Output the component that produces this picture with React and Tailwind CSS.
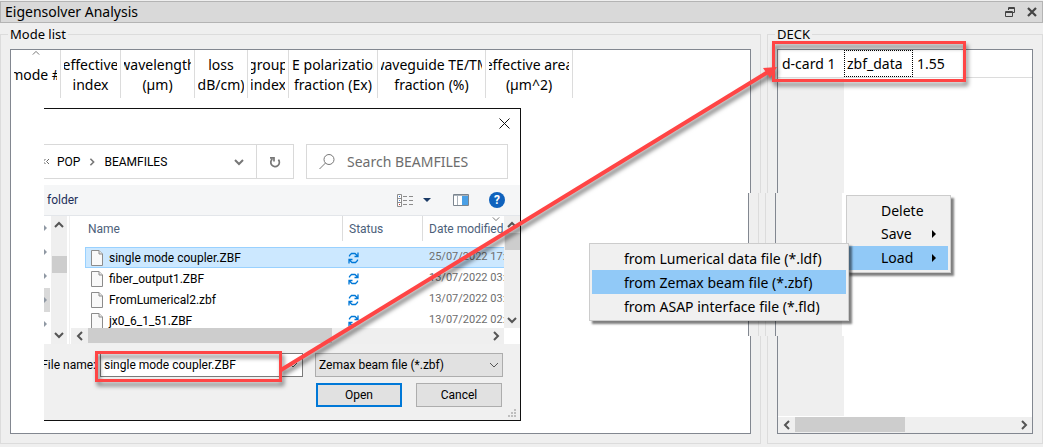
import React, { useState } from 'react';

const MODE_COLUMNS = [
    { lines: ['mode #'], width: 'w-[50px]', sorted: true },
    { lines: ['effective', 'index'], width: 'w-[60px]' },
    { lines: ['wavelength', '(µm)'], width: 'w-[74px]' },
    { lines: ['loss', 'dB/cm)'], width: 'w-[53px]' },
    { lines: ['group', 'index'], width: 'w-[41px]' },
    { lines: ['TE polarization', 'fraction (Ex)'], width: 'w-[89px]' },
    { lines: ['waveguide TE/TM', 'fraction (%)'], width: 'w-[108px]' },
    { lines: ['effective area', '(µm^2)'], width: 'w-[87px]' },
];

const FILES = [
    { name: 'single mode coupler.ZBF', date: '25/07/2022 17:' },
    { name: 'fiber_output1.ZBF', date: '13/07/2022 03:' },
    { name: 'FromLumerical2.zbf', date: '13/07/2022 03:' },
    { name: 'jx0_6_1_51.ZBF', date: '13/07/2022 02:' },
];

const LOAD_ITEMS = [
    'from Lumerical data file (*.ldf)',
    'from Zemax beam file (*.zbf)',
    'from ASAP interface file (*.fld)',
];

const CHEVRONS = {
    up: 'M1 7 L5 3 L9 7',
    down: 'M1 3 L5 7 L9 3',
    left: 'M7 1 L3 5 L7 9',
    right: 'M3 1 L7 5 L3 9',
};

const Chevron = ({ dir, className = 'text-[#555555]', stroke = 2, size = 10 }) => (
    <svg width={size} height={size} viewBox="0 0 10 10" className={`shrink-0 ${className}`} fill="none" stroke="currentColor" strokeWidth={stroke}>
        <path d={CHEVRONS[dir]} />
    </svg>
);

const FileIcon = () => (
    <svg width="12" height="16" viewBox="0 0 12 16" className="shrink-0">
        <path d="M0.5 0.5 H8 L11.5 4 V15.5 H0.5 Z" fill="#f9f9f9" stroke="#8c8c8c" />
        <path d="M8 0.5 V4 H11.5" fill="#e6e6e6" stroke="#8c8c8c" />
    </svg>
);

const SyncIcon = () => (
    <svg width="11" height="12" viewBox="0 0 11 12" className="shrink-0" fill="none" stroke="#0078d7" strokeWidth="1.3">
        <path d="M1.5 4.5 V3.5 L3.5 1.5 H7 L9.6 4 M10 0.5 V4.5 H6.5" />
        <path d="M9.5 7.5 V8.5 L7.5 10.5 H4 L1.4 8 M1 11.5 V7.5 H4.5" />
    </svg>
);

const TitleBar = () => (
    <header className="mt-px flex h-[22px] items-center justify-between border border-[#b4b4b4] bg-[#d9d9d9] pl-1">
        <h1 className="text-sm leading-5">Eigensolver Analysis</h1>
        <div className="flex items-center gap-1">
            <button aria-label="Restore" className="flex h-4 w-4 items-center justify-center">
                <svg width="10" height="10" viewBox="0 0 10 10" fill="none" stroke="#444444">
                    <path d="M3.5 3 V0.5 H9.5 V5.5 H7.5 M3 1.5 H10" />
                    <path d="M0.5 4.5 H7.5 V9.5 H0.5 Z M0 5.5 H8" />
                </svg>
            </button>
            <button aria-label="Close" className="flex h-4 w-5 items-center justify-center">
                <svg width="10" height="10" viewBox="0 0 10 10" stroke="#444444" strokeWidth="2.2">
                    <path d="M1 1 L9 9 M9 1 L1 9" />
                </svg>
            </button>
        </div>
    </header>
);

const ModeList = () => (
    <fieldset className="flex min-w-0 flex-1 flex-col border border-[#dcdcdc] px-[9px] pb-[9px] pt-[5px]">
        <legend className="-ml-0.5 px-0.5 text-[13px] leading-5">Mode list</legend>
        <div className="flex-1 border border-[#828790] bg-white">
            <table className="w-[562px] table-fixed border-separate border-spacing-0">
                <thead>
                    <tr>
                        {MODE_COLUMNS.map((col) => (
                            <th key={col.lines[0]} className={`${col.width} relative h-12 border-r border-[#dcdcdc] p-0 font-normal`}>
                                {col.sorted && (
                                    <span className="absolute inset-x-0 -top-px flex justify-center">
                                        <Chevron dir="up" stroke={1} size={8} />
                                    </span>
                                )}
                                <div className="mx-[3px] overflow-hidden pt-0.5 text-sm leading-5">
                                    {col.lines.map((line) => (
                                        <div key={line} className="flex justify-center whitespace-nowrap">{line}</div>
                                    ))}
                                </div>
                            </th>
                        ))}
                    </tr>
                </thead>
            </table>
        </div>
    </fieldset>
);

const Deck = () => (
    <fieldset className="flex w-[276px] min-w-0 shrink-0 flex-col border border-[#dcdcdc] px-[9px] pb-[9px] pt-[5px]">
        <legend className="-ml-0.5 px-0.5 text-[13px] leading-5">DECK</legend>
        <div className="flex flex-1 flex-col border border-[#828790] bg-white">
            <table className="w-full table-fixed border-separate border-spacing-0 text-sm">
                <tbody>
                    <tr>
                        <th className="h-7 w-[66px] whitespace-nowrap border-b border-[#dcdcdc] p-0 pl-1 text-left font-normal">d-card 1</th>
                        <td className="w-[69px] border-b border-[#dcdcdc] p-0">
                            <div className="flex h-[27px] items-center border border-dotted border-black pl-[2px]">zbf_data</div>
                        </td>
                        <td className="border-b border-[#dcdcdc] p-0 pl-1">1.55</td>
                    </tr>
                </tbody>
            </table>
            <div className="w-[66px] flex-1 bg-[#efefef]" />
            <div className="mt-px flex h-4 items-center bg-[#efefef]">
                <span className="flex w-[17px] justify-center"><Chevron dir="left" /></span>
                <div className="flex h-full flex-1">
                    <div className="h-[15px] w-[110px] bg-[#cdcdcd]" />
                </div>
                <span className="flex w-[17px] justify-center"><Chevron dir="right" /></span>
            </div>
        </div>
    </fieldset>
);

// Slice of the splitter between the two panels, behind the context menu
const SplitterSlice = () => (
    <div className="absolute left-[584px] top-[193px] flex h-[143px] w-[262px] bg-white">
        <div className="w-[165px] border-r border-[#828790]" />
        <div className="w-[10px] border-r border-[#dcdcdc] bg-[#efefef]" />
        <div className="w-[7px] border-r border-[#dcdcdc] bg-[#efefef]" />
        <div className="w-[10px] border-r border-[#828790] bg-[#efefef]" />
        <div className="w-[66px] bg-[#efefef]" />
    </div>
);

const AddressRow = () => (
    <div className="flex h-[35px] gap-3 pr-3">
        <div className="flex w-[250px] border border-l-0 border-[#d9d9d9] text-xs">
            <div className="flex flex-1 items-center overflow-hidden">
                <svg width="6" height="7" viewBox="0 0 6 7" fill="none" stroke="#666666" className="shrink-0">
                    <path d="M1.5 1 L-1 3.5 L1.5 6 M5 1 L2.5 3.5 L5 6" />
                </svg>
                <span className="ml-[7px]">POP</span>
                <span className="mx-2"><Chevron dir="right" size={8} className="text-[#777777]" /></span>
                <span>BEAMFILES</span>
                <button aria-label="Previous locations" className="ml-auto mr-3"><Chevron dir="down" className="text-[#777777]" /></button>
            </div>
            <button aria-label="Refresh" className="flex w-[37px] items-center justify-center border-l border-[#d9d9d9]">
                <svg width="12" height="12" viewBox="0 0 12 12" fill="none" stroke="#777777" strokeWidth="1.7">
                    <path d="M3.4 3 A4.3 4.3 0 1 0 9.4 3.6 M1 1.8 H5 V5.6" />
                </svg>
            </button>
        </div>
        <label className="flex min-w-0 flex-1 items-center border border-[#d9d9d9] pl-3">
            <svg width="16" height="16" viewBox="0 0 16 16" fill="none" stroke="#777777" className="shrink-0">
                <circle cx="10" cy="5.5" r="5" />
                <path d="M6.5 9 L0.5 15" />
            </svg>
            <input aria-label="Search BEAMFILES" placeholder="Search BEAMFILES" className="ml-3 w-full min-w-0 font-['Noto_Sans',sans-serif] text-sm outline-none placeholder:text-[#6d6d6d]" />
        </label>
    </div>
);

const Toolbar = () => (
    <div className="mt-[6px] flex h-[31px] items-center border-b border-[#e3e6ea] bg-[#f5f6f7] pl-[3px] pr-[15px] text-xs text-[#1e2f5a]">
        <button>folder</button>
        <button aria-label="Change view" className="ml-auto flex items-center gap-[9px]">
            <svg width="17" height="13" viewBox="0 0 17 13">
                <path d="M0.5 0.5 H4.5 V12.5 H0.5 Z M0.5 4.5 H4.5 M0.5 8.5 H4.5" fill="#ffffff" stroke="#8c8c8c" />
                <path d="M6 2.5 H10 M12 2.5 H16 M6 6.5 H10 M12 6.5 H16 M6 10.5 H10 M12 10.5 H16" stroke="#8c8c8c" />
                <path d="M2 2 H3 V3 H2 Z M2 6 H3 V7 H2 Z" fill="#3d7edb" />
                <path d="M2 10 H3 V11 H2 Z" fill="#d03030" />
            </svg>
            <svg width="8" height="4" viewBox="0 0 8 4"><path d="M0 0 H8 L4 4 Z" fill="#1b3a66" /></svg>
        </button>
        <button aria-label="Preview pane" className="ml-[22px]">
            <svg width="16" height="12" viewBox="0 0 16 12">
                <path d="M0.5 0.5 H15.5 V11.5 H0.5 Z" fill="#ffffff" stroke="#7b858f" />
                <path d="M1 1.5 H15 M4.5 1 V11" stroke="#a9b2ba" />
                <path d="M9 2 H15 V11 H9 Z" fill="#4aa0e6" />
            </svg>
        </button>
        <button aria-label="Help" className="ml-5 flex h-4 w-4 items-center justify-center rounded-full bg-[#0f62bd] text-xs font-bold text-white">?</button>
    </div>
);

const FolderTree = () => (
    <div className="flex w-[26px] border-r border-[#f0f0f0]">
        <div className="flex w-[7px] flex-col">
            {[0, 1, 2, 3, 4].map((i) => (
                <div key={i} className={`flex h-6 w-[6px] shrink-0 items-center ${i === 3 ? 'bg-[#d9d9d9]' : ''}`}>
                    <svg width="3" height="6" viewBox="0 0 3 6"><path d="M0 0 L3 3 L0 6 Z" fill="#8f98a3" /></svg>
                </div>
            ))}
        </div>
        <div className="flex w-4 flex-col items-center justify-between bg-[#efefef] py-1">
            <Chevron dir="up" />
            <div className="mb-8 h-[17px] w-[15px] bg-[#cdcdcd]" />
            <Chevron dir="down" />
        </div>
    </div>
);

const FileList = () => {
    const [selected, setSelected] = useState(0);

    return (
        <div className="flex min-w-0 flex-1 flex-col pl-px">
            <div className="flex h-28">
                <div className="min-w-0 flex-1 overflow-hidden">
                    <table className="w-full table-fixed border-separate border-spacing-0 text-xs">
                        <thead>
                            <tr className="h-[25px] text-left text-[#4c607a]">
                                <th className="w-[272px] border-r border-[#dcdcdc] p-0 pl-[17px] font-normal">Name</th>
                                <th className="w-20 border-r border-[#dcdcdc] p-0 pl-[6px] font-normal">Status</th>
                                <th className="relative whitespace-nowrap p-0 pl-[6px] font-normal">
                                    Date modified
                                    <span className="absolute -top-px right-1"><Chevron dir="down" stroke={1} size={8} /></span>
                                </th>
                            </tr>
                        </thead>
                        <tbody>
                            <tr className="h-[6px]"><td colSpan={3} className="p-0" /></tr>
                            {FILES.map((file, i) => {
                                const cell = i === selected ? 'border-y border-[#99d1ff] bg-[#cce8ff]' : 'border-y border-transparent';
                                return (
                                    <tr key={file.name} className="h-[21px]" onClick={() => setSelected(i)}>
                                        <td className="p-0 pl-[14px]">
                                            <div className={`flex h-[21px] items-center gap-[6px] border-l pl-[5px] ${cell}`}>
                                                <FileIcon />
                                                <span className="whitespace-nowrap">{file.name}</span>
                                            </div>
                                        </td>
                                        <td className="p-0"><div className={`flex h-[21px] items-center pl-[5px] ${cell}`}><SyncIcon /></div></td>
                                        <td className="p-0"><div className={`flex h-[21px] items-center whitespace-nowrap pl-[6px] text-[11px] text-[#6d6d6d] ${cell}`}>{file.date}</div></td>
                                    </tr>
                                );
                            })}
                        </tbody>
                    </table>
                </div>
                <div className="flex w-4 flex-col items-center bg-[#efefef] pb-[3px] pt-1">
                    <Chevron dir="up" />
                    <div className="mt-[3px] h-[17px] w-[15px] bg-[#cdcdcd]" />
                    <Chevron dir="down" className="mt-auto text-[#555555]" />
                </div>
            </div>
            <div className="mr-4 flex h-4 items-center bg-[#efefef]">
                <span className="flex w-[17px] justify-center"><Chevron dir="left" /></span>
                <div className="flex h-full flex-1">
                    <div className="h-[15px] w-[244px] bg-[#cdcdcd]" />
                </div>
                <span className="flex w-[17px] justify-center"><Chevron dir="right" /></span>
            </div>
        </div>
    );
};

const DialogFooter = () => (
    <div className="relative flex-1 bg-[#f0f0f0] pr-[17px] pt-[9px] text-xs">
        <div className="flex h-6 items-center">
            <div className="flex w-[52px] justify-end overflow-hidden whitespace-nowrap">
                <label htmlFor="file-name">File name:</label>
            </div>
            <div className="ml-1 flex h-6 w-[203px] items-center border border-[#7a7a7a] bg-white pr-1">
                <input id="file-name" defaultValue="single mode coupler.ZBF" className="min-w-0 flex-1 pl-[3px] outline-none" />
                <Chevron dir="down" stroke={1} />
            </div>
            <div className="relative ml-3 h-6 flex-1">
                <select aria-label="File type" className="h-6 w-full appearance-none border border-[#adadad] bg-[#e1e1e1] pl-[3px] outline-none">
                    <option>Zemax beam file (*.zbf)</option>
                </select>
                <span className="pointer-events-none absolute right-1 top-[7px]"><Chevron dir="down" stroke={1} /></span>
            </div>
        </div>
        <div className="mr-px mt-[6px] flex justify-end gap-[14px]">
            <button className="h-6 w-[86px] border-2 border-[#0078d7] bg-[#e1e1e1]">Open</button>
            <button className="h-6 w-[86px] border border-[#adadad] bg-[#e1e1e1]">Cancel</button>
        </div>
        <svg width="9" height="9" viewBox="0 0 9 9" className="absolute bottom-[2px] right-[3px]" fill="#bfbfbf">
            <path d="M6 0 H8 V2 H6 Z M3 3 H5 V5 H3 Z M6 3 H8 V5 H6 Z M0 6 H2 V8 H0 Z M3 6 H5 V8 H3 Z M6 6 H8 V8 H6 Z" />
        </svg>
    </div>
);

const FileDialog = () => (
    <div role="dialog" aria-label="Open file" className="absolute left-[44px] top-[108px] flex h-[313px] w-[477px] flex-col border border-l-0 border-[#111111] bg-white font-['Roboto',sans-serif]">
        <div className="flex h-[35px] items-start justify-end pr-[10px] pt-[9px]">
            <button aria-label="Close dialog">
                <svg width="11" height="11" viewBox="0 0 11 11" stroke="#111111"><path d="M0.5 0.5 L10.5 10.5 M10.5 0.5 L0.5 10.5" /></svg>
            </button>
        </div>
        <AddressRow />
        <Toolbar />
        <div className="flex h-32">
            <FolderTree />
            <FileList />
        </div>
        <DialogFooter />
    </div>
);

const MenuArrow = () => (
    <svg width="5" height="8" viewBox="0 0 5 8"><path d="M0 0 L4 4 L0 8 Z" fill="#000000" /></svg>
);

const ContextMenu = () => (
    <>
        <div role="menu" className="absolute left-[846px] top-[195px] w-[105px] border border-[#cccccc] bg-[#f0f0f0] p-[2px] text-sm shadow-[3px_3px_2px_rgba(0,0,0,0.5)]">
            <button role="menuitem" className="flex h-6 w-full items-center pl-8 pt-0.5">Delete</button>
            <button role="menuitem" className="flex h-6 w-full items-center justify-between pl-8 pr-[11px]">Save <MenuArrow /></button>
            <button role="menuitem" className="flex h-6 w-full items-center justify-between bg-[#91c9f7] pl-8 pr-[11px]">Load <MenuArrow /></button>
        </div>
        <div role="menu" className="absolute left-[589px] top-[243px] w-[260px] border border-[#cccccc] bg-[#f0f0f0] p-[2px] text-sm shadow-[3px_3px_2px_rgba(0,0,0,0.5)]">
            {LOAD_ITEMS.map((item, i) => (
                <button key={item} role="menuitem" className={`flex h-6 w-full items-center whitespace-nowrap pl-8 pt-0.5 ${i === 1 ? 'bg-[#91c9f7]' : ''}`}>
                    {item}
                </button>
            ))}
        </div>
    </>
);

// Callout boxes and the arrow that joins them
const Annotations = () => (
    <svg width="1043" height="447" viewBox="0 0 1043 447" className="pointer-events-none absolute left-0 top-0 drop-shadow-[2px_4px_2px_rgba(0,0,0,0.5)]" fill="none" stroke="#ff4545">
        <rect x="773.5" y="42.5" width="191" height="38" strokeWidth="3" />
        <rect x="96.5" y="352.5" width="184" height="28" strokeWidth="3" />
        <path d="M281 370 L768 72" strokeWidth="4" />
        <path d="M777 67 L770 78 L763 68 Z" fill="#ff4545" stroke="none" />
    </svg>
);

const App = () => (
    <div className="relative flex min-h-screen flex-col overflow-hidden bg-[#efefef] font-['Noto_Sans','Open_Sans',sans-serif] text-black">
        <TitleBar />
        <main className="flex flex-1 gap-[6px] pb-[3px] pt-px">
            <ModeList />
            <Deck />
        </main>
        <SplitterSlice />
        <FileDialog />
        <Annotations />
        <ContextMenu />
    </div>
);

export default App;
